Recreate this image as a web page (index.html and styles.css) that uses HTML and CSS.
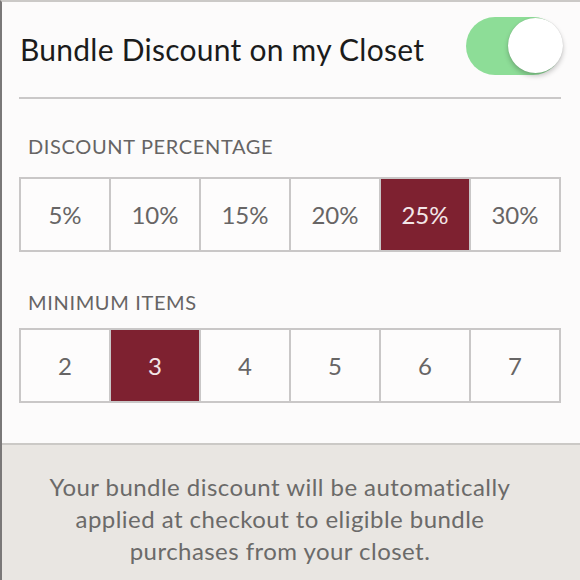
FILE: index.html
```html
<!DOCTYPE html>
<html>
<head>
<meta charset="utf-8">
<link rel="stylesheet" href="styles.css">
</head>
<body>
<div class="page">
  <section class="settings">
    <div class="header">
      <h1 class="title">Bundle Discount on my Closet</h1>
      <div class="toggle"><div class="knob"></div></div>
    </div>
    <div class="divider"></div>
    <div class="label label-first">DISCOUNT PERCENTAGE</div>
    <div class="segments">
      <div class="cell">5%</div>
      <div class="cell">10%</div>
      <div class="cell">15%</div>
      <div class="cell">20%</div>
      <div class="cell selected">25%</div>
      <div class="cell">30%</div>
    </div>
    <div class="label label-second">MINIMUM ITEMS</div>
    <div class="segments">
      <div class="cell">2</div>
      <div class="cell selected">3</div>
      <div class="cell">4</div>
      <div class="cell">5</div>
      <div class="cell">6</div>
      <div class="cell">7</div>
    </div>
  </section>
  <footer class="note">
    <p>Your bundle discount will be automatically<br>applied at checkout to eligible bundle<br>purchases from your closet.</p>
  </footer>
</div>
</body>
</html>
```
FILE: styles.css
```css
html, body {
  margin: 0;
  padding: 0;
  height: 100%;
}
body {
  background: #fcfbfb;
  font-family: Lato, "Liberation Sans", sans-serif;
}
.page {
  height: 100%;
  display: flex;
  flex-direction: column;
  border-left: 2px solid #7a7878;
  border-top: 2px solid #cbc9c7;
  box-sizing: border-box;
}
.settings {
  padding: 0 19px 0 17px;
  height: 441px;
  box-sizing: border-box;
}
.header {
  height: 95px;
  display: flex;
  align-items: center;
  justify-content: space-between;
}
.title {
  margin: -2px 0 0;
  font-weight: 400;
  font-size: 30px;
  letter-spacing: 0.25px;
  color: #1b1b1b;
  padding-left: 1px;
}
.toggle {
  position: relative;
  flex: none;
  width: 96px;
  height: 58px;
  border-radius: 29px;
  background: #8ddd97;
  margin-top: -8px;
  margin-right: -1px;
}
.knob {
  position: absolute;
  top: 1px;
  right: -1px;
  width: 55px;
  height: 55px;
  border-radius: 50%;
  background: #ffffff;
  box-shadow: 0 3px 5px rgba(0, 0, 0, 0.22), 0 0 1px rgba(0, 0, 0, 0.2);
}
.divider {
  height: 2px;
  background: #cac8c8;
}
.label {
  font-size: 20px;
  letter-spacing: 0.65px;
  color: #666464;
  padding-left: 9px;
}
.label-first {
  margin-top: 35px;
  margin-bottom: 19px;
}
.label-second {
  margin-top: 38px;
  margin-bottom: 14px;
}
.segments {
  display: grid;
  grid-template-columns: repeat(6, 1fr);
  gap: 2px;
  padding: 2px;
  background: #c9c7c7;
  height: 75px;
  box-sizing: border-box;
}
.cell {
  background: #fdfcfc;
  display: flex;
  align-items: center;
  justify-content: center;
  font-size: 24px;
  color: #676565;
}
.cell.selected {
  background: #7e2130;
  color: #f3e6e8;
}
.note {
  flex: 1;
  border-top: 2px solid #cbc9c6;
  background: #e9e6e2;
  padding-right: 22px;
}
.note p {
  margin: 26px 0 0;
  text-align: center;
  font-size: 24px;
  letter-spacing: 0.45px;
  line-height: 32px;
  color: #6b6a69;
}
```
